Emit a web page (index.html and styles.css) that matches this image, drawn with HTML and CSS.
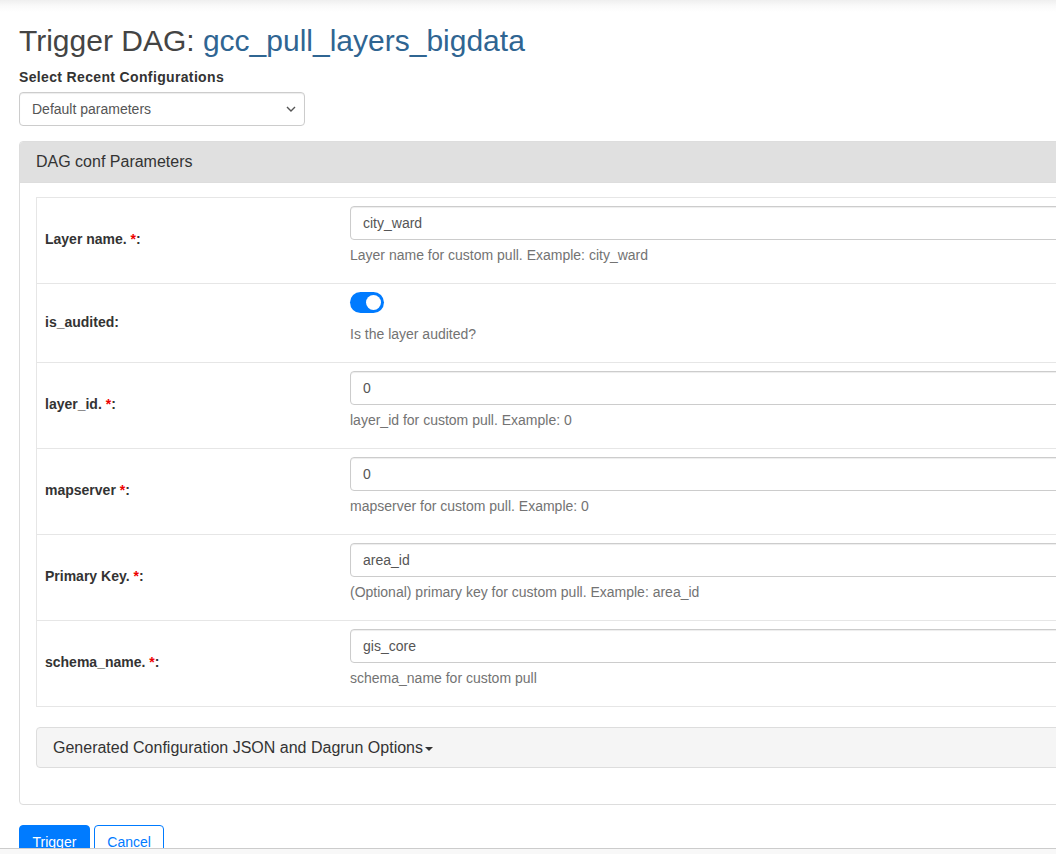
FILE: index.html
```html
<!DOCTYPE html>
<html>
<head>
<meta charset="utf-8">
<title>Trigger DAG</title>
<link rel="stylesheet" href="styles.css">
</head>
<body>
<div class="page">
  <h2 class="title">Trigger DAG: <span class="dag-id">gcc_pull_layers_bigdata</span></h2>
  <label class="field-label">Select Recent Configurations</label>
  <div class="select">
    <span>Default parameters</span>
    <svg class="chev" width="10" height="6" viewBox="0 0 10 6"><path d="M1 1l4 4 4-4" fill="none" stroke="#555" stroke-width="1.4"/></svg>
  </div>

  <div class="panel">
    <div class="panel-heading">DAG conf Parameters</div>
    <div class="panel-body">
      <table class="params">
        <tr>
          <td class="lbl">Layer name. <span class="req">*</span>:</td>
          <td class="val"><div class="input">city_ward</div><div class="help">Layer name for custom pull. Example: city_ward</div></td>
        </tr>
        <tr>
          <td class="lbl">is_audited:</td>
          <td class="val"><div class="switch-wrap"><span class="switch"><span class="knob"></span></span></div><div class="help">Is the layer audited?</div></td>
        </tr>
        <tr>
          <td class="lbl">layer_id. <span class="req">*</span>:</td>
          <td class="val"><div class="input">0</div><div class="help">layer_id for custom pull. Example: 0</div></td>
        </tr>
        <tr>
          <td class="lbl">mapserver <span class="req">*</span>:</td>
          <td class="val"><div class="input">0</div><div class="help">mapserver for custom pull. Example: 0</div></td>
        </tr>
        <tr>
          <td class="lbl">Primary Key. <span class="req">*</span>:</td>
          <td class="val"><div class="input">area_id</div><div class="help">(Optional) primary key for custom pull. Example: area_id</div></td>
        </tr>
        <tr>
          <td class="lbl">schema_name. <span class="req">*</span>:</td>
          <td class="val"><div class="input">gis_core</div><div class="help">schema_name for custom pull</div></td>
        </tr>
      </table>
      <div class="gen-box">Generated Configuration JSON and Dagrun Options<span class="caret"></span></div>
    </div>
  </div>

  <div class="actions">
    <button class="btn btn-primary">Trigger</button>
    <button class="btn btn-outline">Cancel</button>
  </div>
</div>
<div class="footer"></div>
</body>
</html>
```
FILE: styles.css
```css
html {
  overflow: hidden;
  background: linear-gradient(#efefef 0px, #fafafa 6px, #ffffff 12px) no-repeat;
  background-color: #fff;
}
body {
  margin: 0;
  font-family: "Liberation Sans", Arial, Helvetica, sans-serif;
  font-size: 14px;
  line-height: 20px;
  color: #333;
}
.page {
  width: 1400px;
  padding: 24px 0 0 19px;
}
.title {
  margin: 0 0 10px;
  font-size: 30px;
  line-height: 33px;
  font-weight: normal;
  color: #444;
}
.dag-id {
  color: #2f6592;
}
.field-label {
  display: block;
  font-size: 14px;
  letter-spacing: 0.35px;
  font-weight: bold;
  margin-bottom: 5px;
  color: #333;
}
.select {
  box-sizing: border-box;
  width: 286px;
  height: 34px;
  border: 1px solid #ccc;
  border-radius: 4px;
  padding: 0 8px 0 12px;
  display: flex;
  align-items: center;
  justify-content: space-between;
  color: #555;
  box-shadow: inset 0 1px 1px rgba(0,0,0,.075);
}
.panel {
  margin-top: 15px;
  border: 1px solid #ddd;
  border-radius: 4px;
  width: 1200px;
}
.panel-heading {
  background: #e0e0e0;
  padding: 10px 16px;
  font-size: 16px;
  line-height: 20px;
  color: #333;
  border-bottom: 1px solid #ddd;
  border-radius: 3px 3px 0 0;
}
.panel-body {
  padding: 14px 16px 15px 16px;
}
.params {
  width: 100%;
  border-collapse: collapse;
  margin-bottom: 20px;
  border: 1px solid #e6e6e6;
}
.params td {
  border-top: 1px solid #e6e6e6;
  padding: 8px;
  vertical-align: middle;
}
.lbl {
  width: 289px;
  font-weight: bold;
  color: #333;
  padding-bottom: 11px !important;
}
.req {
  color: #e00;
}
.input {
  box-sizing: border-box;
  height: 34px;
  border: 1px solid #ccc;
  border-radius: 4px;
  padding: 6px 12px;
  color: #555;
  box-shadow: inset 0 1px 1px rgba(0,0,0,.075);
}
.help {
  color: #737373;
  margin: 5px 0 10px;
}
.switch-wrap {
  height: 27px;
}
.switch {
  display: block;
  box-sizing: border-box;
  width: 34px;
  height: 21px;
  border-radius: 11px;
  background: #007bff;
  position: relative;
}
.knob {
  position: absolute;
  right: 3px;
  top: 3px;
  width: 15px;
  height: 15px;
  border-radius: 50%;
  background: #fff;
}
.gen-box {
  background: #f5f5f5;
  border: 1px solid #ddd;
  border-radius: 4px;
  padding: 10px 16px;
  font-size: 16px;
  line-height: 19px;
  color: #333;
  margin-bottom: 21px;
}
.caret {
  display: inline-block;
  width: 0;
  height: 0;
  margin-left: 2px;
  vertical-align: middle;
  border-top: 4px solid #333;
  border-left: 4px solid transparent;
  border-right: 4px solid transparent;
}
.actions {
  margin-top: 20px;
  display: flex;
  gap: 4px;
}
.btn {
  font-family: inherit;
  font-size: 14px;
  line-height: 20px;
  padding: 6px 12.5px;
  border-radius: 4px;
  border: 1px solid #007bff;
  cursor: pointer;
}
.btn-primary {
  background: #007bff;
  color: #fff;
}
.btn-outline {
  background: #fff;
  color: #007bff;
}
.footer {
  position: fixed;
  left: 0;
  right: 0;
  bottom: 0;
  height: 5px;
  background: #f8f8f8;
  border-top: 1px solid #ccc;
}
```
